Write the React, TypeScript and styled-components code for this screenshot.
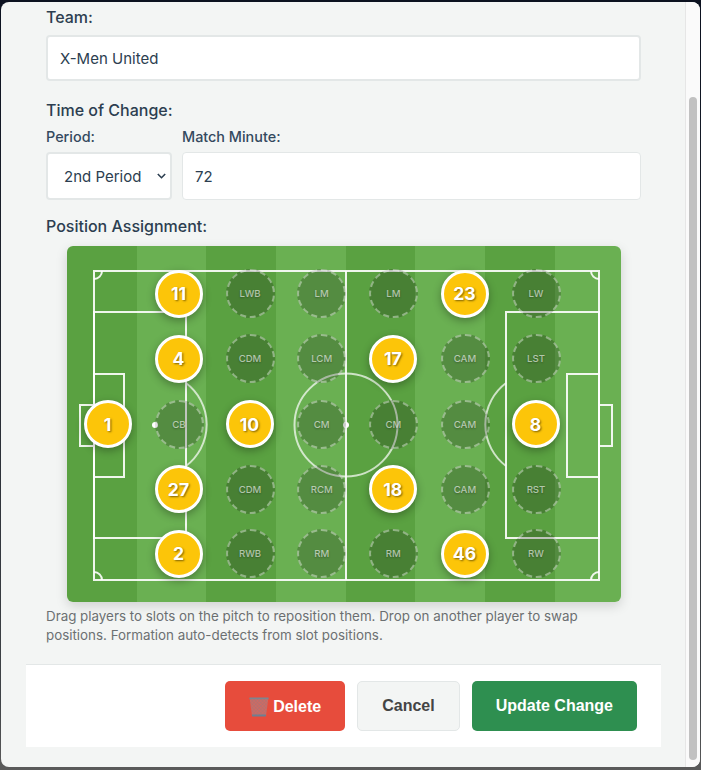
import React from 'react';
import styled, { createGlobalStyle } from 'styled-components';

const GlobalStyle = createGlobalStyle`
  html, body {
    margin: 0;
    padding: 0;
    height: 770px;
    overflow: hidden;
    background: #3f4347;
    font-family: Inter, "Liberation Sans", sans-serif;
  }
  * { box-sizing: border-box; }
`;

const Page = styled.div`
  height: 770px;
  padding: 2px 1px 3px 1px;
  background: linear-gradient(to bottom, #0c1220 0, #0c1220 40px, #3f4347 700px, #5a5a5a 100%);
`;

const Modal = styled.div`
  display: flex;
  height: 765px;
  background: #f3f5f4;
  border-radius: 8px;
  overflow: hidden;
`;

const Scroller = styled.div`
  flex: 1;
  min-width: 0;
  padding: 0 24px 0 25px;
`;

const Form = styled.div`
  padding: 6px 20px 0 20px;
`;

const Label = styled.div`
  font-size: 16px;
  font-weight: 500;
  line-height: 18px;
  color: #2c3e50;
  margin-bottom: 9px;
`;

const SubLabel = styled.div`
  font-size: 14.4px;
  font-weight: 500;
  line-height: 17px;
  color: #34495e;
  margin-bottom: 7px;
`;

const TextBox = styled.div<{ $thick?: boolean }>`
  display: flex;
  align-items: center;
  height: ${(p) => (p.$thick ? '46px' : '48px')};
  padding: 0 12px;
  background: #fff;
  border: ${(p) => (p.$thick ? '2px' : '1px')} solid #e3e7e7;
  border-radius: 4px;
  font-size: 15px;
  color: #2c3e50;
`;

const Section = styled.div<{ $gap: number }>`
  margin-bottom: ${(p) => p.$gap}px;
`;

const TimeRow = styled.div`
  display: flex;
  gap: 10px;
`;

const PeriodField = styled.div`
  width: 126px;
`;

const MinuteField = styled.div`
  flex: 1;
`;

const SelectBox = styled(TextBox)`
  justify-content: space-between;
  padding: 0 4px 0 16px;
  border-width: 2px;
`;

const PitchWrap = styled.div`
  display: flex;
  justify-content: center;
  margin-top: 11px;
`;

const Pitch = styled.div`
  position: relative;
  width: 554px;
  height: 356px;
  border-radius: 6px;
  background: repeating-linear-gradient(to right, #5aa141 0, #5aa141 69.7px, #6ab052 69.7px, #6ab052 139.4px);
  box-shadow: 0 4px 12px rgba(0, 0, 0, 0.15);
`;

const Lines = styled.svg`
  position: absolute;
  inset: 0;
`;

const Slot = styled.div<{ $x: number; $y: number }>`
  position: absolute;
  left: ${(p) => p.$x - 24}px;
  top: ${(p) => p.$y - 24.5}px;
  width: 49px;
  height: 49px;
  display: flex;
  align-items: center;
  justify-content: center;
  border-radius: 50%;
  border: 2px dashed rgba(255, 255, 255, 0.4);
  background: rgba(0, 0, 0, 0.2);
  color: rgba(255, 255, 255, 0.6);
  font-size: 9.6px;
  font-weight: 500;
  text-shadow: 0 1px 2px rgba(0, 0, 0, 0.3);
`;

const Player = styled.div<{ $x: number; $y: number }>`
  position: absolute;
  left: ${(p) => p.$x - 24}px;
  top: ${(p) => p.$y - 24}px;
  width: 48px;
  height: 48px;
  display: flex;
  align-items: center;
  justify-content: center;
  border-radius: 50%;
  border: 3px solid #fff;
  background: #fcc509;
  color: #fff;
  font-size: 17.6px;
  font-weight: 700;
  text-shadow: 1px 1px 2px rgba(0, 0, 0, 0.5);
  box-shadow: 0 3px 8px rgba(0, 0, 0, 0.3);
`;

const Hint = styled.p`
  margin: 5px 0 0 0;
  font-size: 13.37px;
  line-height: 19px;
  color: #6c7072;
`;

const Footer = styled.div`
  display: flex;
  justify-content: flex-end;
  gap: 12px;
  margin-top: 19px;
  padding: 16px 24px;
  background: #fff;
  border-top: 1px solid #e3e7e7;
`;

const Button = styled.button<{ $variant: 'danger' | 'plain' | 'primary' }>`
  display: flex;
  align-items: center;
  justify-content: center;
  gap: 4px;
  height: 50px;
  padding: ${(p) => (p.$variant === 'danger' ? '2px' : '0')} 24px 0 24px;
  border-radius: 5px;
  font-family: "Liberation Sans", Arial, sans-serif;
  font-size: 16px;
  font-weight: 700;
  border: ${(p) => (p.$variant === 'plain' ? '1px solid #e3e7e7' : 'none')};
  color: ${(p) => (p.$variant === 'plain' ? '#444' : '#fff')};
  background: ${(p) =>
    p.$variant === 'danger' ? '#e74c3c' : p.$variant === 'primary' ? '#2e8f50' : '#f3f5f4'};
`;

const ScrollTrack = styled.div`
  width: 15px;
  flex: none;
  padding: 95px 3px 7px 3px;
  background: #fafafa;
  border-left: 1px solid #e6e6e6;
`;

const ScrollThumb = styled.div`
  height: 100%;
  background: #c1c1c1;
  border-radius: 4px;
`;

const SLOTS: [string, number, number][] = [
  ['CB', 112, 178],
  ['LWB', 183, 47.5],
  ['CDM', 183, 112.5],
  ['CDM', 183, 243],
  ['RWB', 183, 307.5],
  ['LM', 254.7, 47.5],
  ['LCM', 254.7, 112.5],
  ['CM', 254.7, 178],
  ['RCM', 254.7, 243],
  ['RM', 254.7, 307.5],
  ['LM', 326.3, 47.5],
  ['CM', 326.3, 178],
  ['RM', 326.3, 307.5],
  ['CAM', 398, 112.5],
  ['CAM', 398, 178],
  ['CAM', 398, 243],
  ['LW', 469, 47.5],
  ['LST', 469, 112.5],
  ['RST', 469, 243],
  ['RW', 469, 307.5],
];

const PLAYERS: [string, number, number][] = [
  ['1', 41, 178],
  ['11', 112, 47.5],
  ['4', 112, 112.5],
  ['27', 112, 243],
  ['2', 112, 307.5],
  ['10', 183, 178],
  ['17', 326.3, 112.5],
  ['18', 326.3, 243],
  ['23', 398, 47.5],
  ['46', 398, 307.5],
  ['8', 469, 178],
];

function PitchLines() {
  return (
    <Lines width="554" height="356" viewBox="0 0 554 356" fill="none" stroke="rgba(255,255,255,0.9)" strokeWidth="2">
      <rect x="27" y="25" width="505" height="309" />
      <line x1="279" y1="25" x2="279" y2="334" />
      <circle cx="279" cy="179" r="51.5" stroke="rgba(255,255,255,0.7)" />
      <circle cx="279" cy="179" r="3" fill="#fff" stroke="none" />
      <circle cx="88" cy="179" r="3" fill="#fff" stroke="none" />
      <rect x="27" y="66" width="92" height="226" />
      <rect x="27" y="128" width="30" height="103" />
      <rect x="13" y="159" width="14" height="41" />
      <path d="M119 137 A52 52 0 0 1 119 220" stroke="rgba(255,255,255,0.7)" />
      <rect x="439" y="66" width="93" height="226" />
      <rect x="500" y="128" width="32" height="103" />
      <rect x="532" y="159" width="13" height="41" />
      <path d="M439 137 A52 52 0 0 0 439 220" stroke="rgba(255,255,255,0.7)" />
      <path d="M27 33 A8 8 0 0 0 35 25" />
      <path d="M524 25 A8 8 0 0 0 532 33" />
      <path d="M35 334 A8 8 0 0 0 27 326" />
      <path d="M532 326 A8 8 0 0 0 524 334" />
    </Lines>
  );
}

function TrashIcon() {
  return (
    <svg width="20" height="20" viewBox="0 0 20 20">
      <defs>
        <pattern id="mesh" width="2.4" height="2.4" patternUnits="userSpaceOnUse" patternTransform="rotate(45)">
          <rect width="2.4" height="2.4" fill="#cf6a62" />
          <path d="M0 0H2.4M0 0V2.4" stroke="#a0777c" strokeWidth="0.7" />
        </pattern>
      </defs>
      <path d="M0.8 2H19.2L17 19H3Z" fill="url(#mesh)" />
      <rect x="0.3" y="0.5" width="19.4" height="1.8" rx="0.6" fill="#7c8590" />
      <rect x="3" y="17.6" width="14" height="1.8" rx="0.6" fill="#6d7f92" />
    </svg>
  );
}

function Chevron() {
  return (
    <svg width="9" height="6" viewBox="0 0 9 6" fill="none" stroke="#2c3e50" strokeWidth="1.6">
      <path d="M0.8 1L4.5 4.7L8.2 1" />
    </svg>
  );
}

export default function App() {
  return (
    <>
      <GlobalStyle />
      <Page>
        <Modal>
          <Scroller>
            <Form>
              <Section $gap={20}>
                <Label>Team:</Label>
                <TextBox $thick>X-Men United</TextBox>
              </Section>
              <Section $gap={17}>
                <Label>Time of Change:</Label>
                <TimeRow>
                  <PeriodField>
                    <SubLabel>Period:</SubLabel>
                    <SelectBox>
                      2nd Period
                      <Chevron />
                    </SelectBox>
                  </PeriodField>
                  <MinuteField>
                    <SubLabel>Match Minute:</SubLabel>
                    <TextBox>72</TextBox>
                  </MinuteField>
                </TimeRow>
              </Section>
              <Label>Position Assignment:</Label>
              <PitchWrap>
                <Pitch>
                  <PitchLines />
                  {SLOTS.map(([name, x, y]) => (
                    <Slot key={name + x + y} $x={x} $y={y}>
                      {name}
                    </Slot>
                  ))}
                  {PLAYERS.map(([num, x, y]) => (
                    <Player key={num} $x={x} $y={y}>
                      {num}
                    </Player>
                  ))}
                </Pitch>
              </PitchWrap>
              <Hint>
                Drag players to slots on the pitch to reposition them. Drop on another player to swap positions.
                Formation auto-detects from slot positions.
              </Hint>
            </Form>
            <Footer>
              <Button $variant="danger">
                <TrashIcon />
                Delete
              </Button>
              <Button $variant="plain">Cancel</Button>
              <Button $variant="primary">Update Change</Button>
            </Footer>
          </Scroller>
          <ScrollTrack>
            <ScrollThumb />
          </ScrollTrack>
        </Modal>
      </Page>
    </>
  );
}
